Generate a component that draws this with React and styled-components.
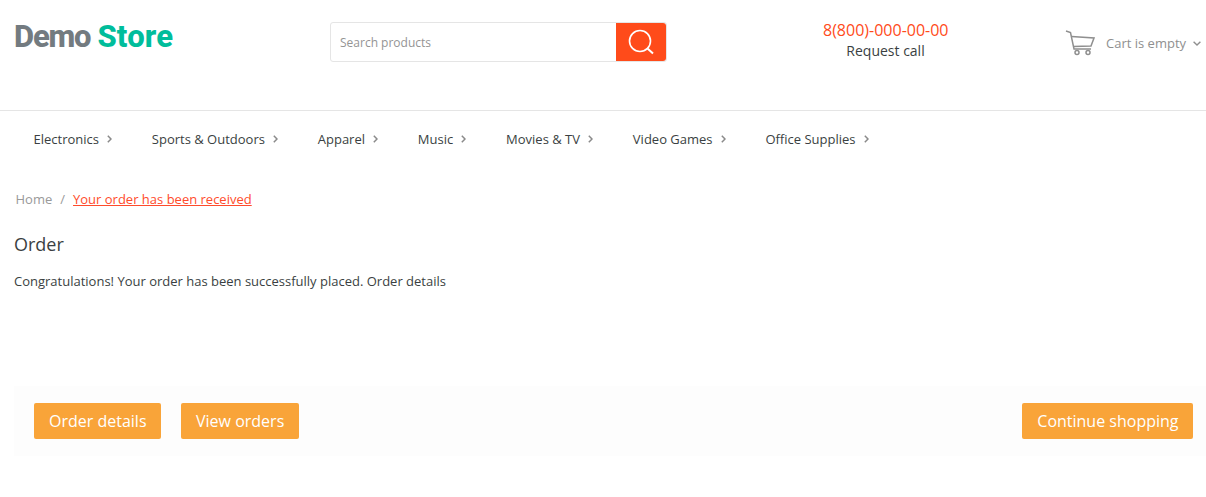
import React from 'react'
import styled, { createGlobalStyle } from 'styled-components'

const GlobalStyle = createGlobalStyle`
    html, body {
        margin: 0;
        padding: 0;
        background: #fff;
        font-family: "Open Sans", sans-serif;
        color: #3a3f42;
    }
    a {
        color: inherit;
        text-decoration: none;
    }
`

const Header = styled('header')`
    height: 111px;
    box-sizing: border-box;
    border-bottom: 1px solid #e5e5e5;
    display: grid;
    grid-template-columns: 330px 337px 1fr 140px;
    padding-left: 14px;
    align-items: start;
`

const Logo = styled('a')`
    margin-top: 18px;
    font-family: Roboto, sans-serif;
    font-weight: 800;
    font-size: 31px;
    line-height: 38px;
    letter-spacing: -1.2px;
    color: #737b80;
    display: flex;
    gap: 7px;
`

const LogoAccent = styled('span')`
    color: #00bd9b;
    letter-spacing: 0.2px;
`

const Search = styled('form')`
    grid-column: 2;
    margin-top: 22px;
    margin-left: -14px;
    width: 337px;
    height: 40px;
    box-sizing: border-box;
    border: 1px solid #e5e5e5;
    border-radius: 3px;
    display: flex;
`

const SearchInput = styled('input')`
    flex: 1;
    min-width: 0;
    border: 0;
    outline: 0;
    padding: 0 9px;
    font-family: inherit;
    font-size: 12px;
    background: transparent;

    &::placeholder {
        color: #949494;
        opacity: 1;
    }
`

const SearchButton = styled('button')`
    width: 50px;
    border: 0;
    padding: 0;
    background: #ff4b1a;
    border-radius: 0 3px 3px 0;
    display: flex;
    align-items: center;
    justify-content: center;
`

const Phone = styled('div')`
    margin-top: 20px;
    margin-left: 142px;
    width: 125px;
    text-align: center;
    white-space: nowrap;
`

const PhoneNumber = styled('div')`
    color: #ff4b1a;
    font-size: 16px;
    line-height: 20px;
`

const RequestCall = styled('a')`
    display: block;
    font-size: 14px;
    line-height: 20px;
    margin-top: 1px;
`

const Cart = styled('div')`
    margin-top: 30px;
    margin-left: -1px;
    display: flex;
    align-items: center;
    font-size: 13px;
    color: #8f8f8f;
    white-space: nowrap;
`

const CartLabel = styled('span')`
    margin-left: 11px;
    margin-right: 7px;
`

const Nav = styled('nav')`
    height: 55px;
    padding-left: 33.5px;
    display: flex;
    align-items: center;
    gap: 39.85px;
    font-size: 13px;
`

const NavItem = styled('a')`
    display: flex;
    align-items: center;
    gap: 8px;
`

const Breadcrumbs = styled('div')`
    margin-top: 24px;
    padding-left: 15.5px;
    font-size: 13px;
    line-height: 18px;
    color: #999;
`

const Crumb = styled('a')`
    color: #ff4b2b;
    text-decoration: underline;
`

const Separator = styled('span')`
    margin: 0 8px;
`

const Content = styled('main')`
    padding-left: 14px;
`

const Title = styled('h1')`
    margin: 24px 0 0;
    font-size: 18px;
    font-weight: 400;
    line-height: 24px;
`

const Message = styled('p')`
    margin: 16px 0 0;
    font-size: 13px;
    line-height: 18px;
`

const Actions = styled('div')`
    margin-top: 96px;
    height: 70px;
    box-sizing: border-box;
    padding: 0 13px 0 20px;
    background: #fdfdfd;
    display: flex;
    align-items: center;
    gap: 20px;
`

const ActionButton = styled('a')`
    height: 36px;
    padding: 0 14.5px 0 15px;
    display: flex;
    align-items: center;
    background: #f9a439;
    border-radius: 2px;
    color: #fff;
    font-size: 16px;
    margin-left: ${props => (props.$push ? 'auto' : '0')};
`

const Chevron = () => (
    <svg width="5" height="8" viewBox="0 0 5 8" fill="none" stroke="#8a8a8a" strokeWidth="1.5">
        <path d="M0.8 0.8 L4 4 L0.8 7.2" />
    </svg>
)

const navItems = [
    'Electronics',
    'Sports & Outdoors',
    'Apparel',
    'Music',
    'Movies & TV',
    'Video Games',
    'Office Supplies',
]

const App = () => {
    return (
        <>
            <GlobalStyle />
            <Header>
                <Logo href="#">
                    <span>Demo</span>
                    <LogoAccent>Store</LogoAccent>
                </Logo>
                <Search>
                    <SearchInput placeholder="Search products" />
                    <SearchButton type="button" aria-label="Search">
                        <svg width="26" height="26" viewBox="0 0 26 26" fill="none" stroke="#fff">
                            <circle cx="12" cy="12" r="10.5" strokeWidth="1.6" />
                            <path d="M19.5 19.5 L25 24.5" strokeWidth="2" />
                        </svg>
                    </SearchButton>
                </Search>
                <Phone>
                    <PhoneNumber>8(800)-000-00-00</PhoneNumber>
                    <RequestCall href="#">Request call</RequestCall>
                </Phone>
                <Cart>
                    <svg width="30" height="26" viewBox="0 0 30 26" fill="none" stroke="#8f8f8f" strokeWidth="1.5">
                        <path d="M1 1 L5.5 2.5 L9 19 H26" />
                        <path d="M6.5 6.5 L29 8 L26 16 L8.3 16.5" />
                        <circle cx="12" cy="22.5" r="2" />
                        <circle cx="23" cy="22.5" r="2" />
                    </svg>
                    <CartLabel>Cart is empty</CartLabel>
                    <svg width="8" height="5" viewBox="0 0 8 5" fill="none" stroke="#8f8f8f" strokeWidth="1.4">
                        <path d="M0.6 0.7 L4 4 L7.4 0.7" />
                    </svg>
                </Cart>
            </Header>
            <Nav>
                {navItems.map(item => (
                    <NavItem href="#" key={item}>
                        {item}
                        <Chevron />
                    </NavItem>
                ))}
            </Nav>
            <Breadcrumbs>
                <a href="#">Home</a>
                <Separator>/</Separator>
                <Crumb href="#">Your order has been received</Crumb>
            </Breadcrumbs>
            <Content>
                <Title>Order</Title>
                <Message>
                    Congratulations! Your order has been successfully placed. Order details
                </Message>
                <Actions>
                    <ActionButton href="#">Order details</ActionButton>
                    <ActionButton href="#">View orders</ActionButton>
                    <ActionButton href="#" $push>Continue shopping</ActionButton>
                </Actions>
            </Content>
        </>
    )
}

export default App
